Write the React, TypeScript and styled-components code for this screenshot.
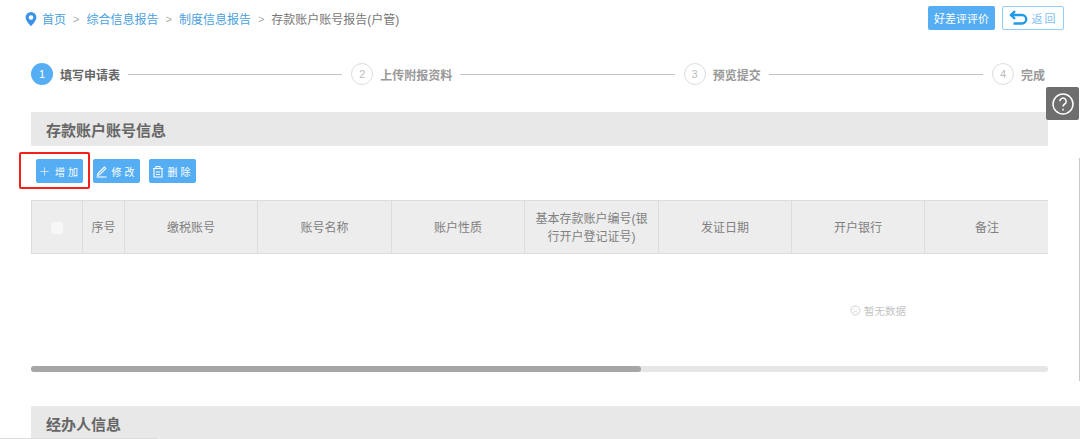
import styled, { createGlobalStyle } from "styled-components";
import { Plus } from "lucide-react";

const GlobalStyle = createGlobalStyle`
  html, body {
    margin: 0;
    padding: 0;
    background: #fff;
    overflow: hidden;
    font-family: "Liberation Sans", "Noto Sans CJK SC", sans-serif;
  }
`

const Page = styled.div`
  position: relative;
  width: 1080px;
  height: 439px;
  overflow: hidden;
  box-sizing: border-box;
  padding: 0 32px 0 31px;
`

const TopBar = styled.div`
  display: flex;
  justify-content: space-between;
  align-items: center;
  height: 37px;
`

const Crumbs = styled.div`
  display: flex;
  align-items: center;
  margin-left: -7px;
  font-size: 12px;
  color: #777;
`

const CrumbLink = styled.span`
  color: #4a9fe0;
`

const CrumbSep = styled.span`
  color: #aaa;
  margin: 0 7px;
  font-size: 11px;
`

const TopActions = styled.div`
  display: flex;
  gap: 7px;
  margin-right: -16px;
  margin-top: -1px;
`

const RateButton = styled.div`
  width: 67px;
  height: 24px;
  display: flex;
  align-items: center;
  justify-content: center;
  background: #55aef4;
  border-radius: 2px;
  color: #fff;
  font-size: 11px;
`

const BackButton = styled.div`
  width: 62px;
  height: 24px;
  box-sizing: border-box;
  display: flex;
  align-items: center;
  justify-content: center;
  gap: 4px;
  border: 1px solid #93cdf8;
  border-radius: 2px;
  color: #7cc0f4;
  font-size: 11px;
  letter-spacing: 2px;
`

const Stepper = styled.div`
  display: flex;
  align-items: center;
  height: 24px;
  margin-top: 25px;
  margin-right: 3px;
`

const StepCircle = styled.div<{ $active?: boolean }>`
  width: 22px;
  height: 22px;
  box-sizing: border-box;
  flex-shrink: 0;
  border-radius: 50%;
  display: flex;
  align-items: center;
  justify-content: center;
  font-size: 11px;
  background: ${(p) => (p.$active ? "#55aef4" : "#fff")};
  color: ${(p) => (p.$active ? "#fff" : "#bbb")};
  border: ${(p) => (p.$active ? "none" : "1px solid #ddd")};
`

const StepLabel = styled.div<{ $active?: boolean }>`
  margin-left: 7px;
  font-size: 12px;
  font-weight: 700;
  flex-shrink: 0;
  color: ${(p) => (p.$active ? "#666" : "#999")};
`

const StepLine = styled.div`
  flex: 1 1 0;
  height: 1px;
  background: #c4c4c4;
  margin: 0 9px 0 8px;
`

const SectionBar = styled.div<{ $gap: number; $bleed?: boolean }>`
  height: 34px;
  flex-shrink: 0;
  display: flex;
  align-items: center;
  padding-left: 15px;
  margin-top: ${(p) => p.$gap}px;
  margin-right: ${(p) => (p.$bleed ? "-32px" : "0")};
  background: #e8e8e8;
  font-size: 15px;
  font-weight: 700;
  color: #666;
`

const Toolbar = styled.div`
  position: relative;
  display: flex;
  gap: 9.5px;
  padding-left: 5px;
  margin-top: 13px;
`

const ToolButton = styled.div`
  height: 24px;
  width: 47px;
  display: flex;
  align-items: center;
  justify-content: center;
  gap: 4px;
  background: #55aef4;
  border-radius: 2px;
  color: #fff;
  font-size: 10px;
  letter-spacing: 3px;
`

const Highlight = styled.div`
  position: absolute;
  left: -12px;
  top: -7px;
  width: 71px;
  height: 37px;
  box-sizing: border-box;
  border: 2.5px solid #f5201c;
  border-radius: 2px;
`

const TableHead = styled.div`
  display: grid;
  grid-template-columns: 51px 42px 133px 134px 133px 134px 133px 133px 124px;
  height: 54px;
  box-sizing: border-box;
  margin-top: 17px;
  background: #ededed;
  border-top: 1px solid #dcdcdc;
  border-bottom: 1px solid #dcdcdc;
  border-left: 1px solid #dcdcdc;
`

const HeadCell = styled.div`
  display: flex;
  align-items: center;
  justify-content: center;
  text-align: center;
  padding: 1px 8px 0;
  border-right: 1px solid #dcdcdc;
  font-size: 12px;
  line-height: 18px;
  color: #808080;

  &:last-child {
    border-right: none;
  }
`

const FakeCheck = styled.div`
  width: 12px;
  height: 12px;
  background: #f7f7f7;
  border-radius: 2px;
`

const EmptyArea = styled.div`
  height: 112px;
  display: flex;
  align-items: center;
  justify-content: flex-end;
  padding: 0 142px 0 0;
  box-sizing: border-box;
`

const EmptyText = styled.div`
  display: flex;
  align-items: center;
  gap: 3px;
  font-size: 10.5px;
  color: #c4c4c4;
`

const ScrollTrack = styled.div`
  height: 6px;
  background: #e6e6e6;
  border-radius: 3px;
`

const ScrollThumb = styled.div`
  width: 610px;
  height: 6px;
  background: #a6a6a6;
  border-radius: 3px;
`

const HelpBox = styled.div`
  position: absolute;
  left: 1046px;
  top: 87px;
  width: 33px;
  height: 33px;
  display: flex;
  align-items: center;
  justify-content: center;
  background: #6e6e6e;
  border-radius: 2px;
`

const BottomEdge = styled.div`
  position: absolute;
  left: 0;
  bottom: 0;
  width: 157px;
  height: 1px;
  background: #dcdcdc;
`

const PageScrollbar = styled.div`
  position: absolute;
  right: 0;
  top: 158px;
  width: 1px;
  height: 223px;
  background: #c8c8c8;
`

const columns = [
  "序号",
  "缴税账号",
  "账号名称",
  "账户性质",
  "基本存款账户编号(银行开户登记证号)",
  "发证日期",
  "开户银行",
  "备注",
];

export default function App(): JSX.Element {
  return (
    <Page>
      <GlobalStyle />
      <TopBar>
        <Crumbs>
          <svg width="14" height="16" viewBox="0 0 14 16" style={{ marginRight: 4 }}>
            <path
              fillRule="evenodd"
              fill="#3b92e8"
              d="M7 1a5.4 5.4 0 0 0-5.4 5.4C1.6 10 7 15 7 15s5.400-5 5.400-8.600A5.400 5.400 0 0 0 7 1Zm0 3.200a2.300 2.300 0 1 1 0 4.600 2.300 2.300 0 0 1 0-4.600Z"
            />
          </svg>
          <CrumbLink>首页</CrumbLink>
          <CrumbSep>&gt;</CrumbSep>
          <CrumbLink>综合信息报告</CrumbLink>
          <CrumbSep>&gt;</CrumbSep>
          <CrumbLink>制度信息报告</CrumbLink>
          <CrumbSep>&gt;</CrumbSep>
          <span>存款账户账号报告(户管)</span>
        </Crumbs>
        <TopActions>
          <RateButton>好差评评价</RateButton>
          <BackButton>
            <svg width="19" height="16" viewBox="0 0 19 16" fill="none" stroke="#1f9be8" strokeWidth="2.400">
              <path d="M6 1.200 2 5l4 3.800" />
              <path d="M2.500 5H13a4 4 0 0 1 0 8.500H4.500" />
            </svg>
            返回
          </BackButton>
        </TopActions>
      </TopBar>

      <Stepper>
        <StepCircle $active>1</StepCircle>
        <StepLabel $active>填写申请表</StepLabel>
        <StepLine />
        <StepCircle>2</StepCircle>
        <StepLabel>上传附报资料</StepLabel>
        <StepLine />
        <StepCircle>3</StepCircle>
        <StepLabel>预览提交</StepLabel>
        <StepLine />
        <StepCircle>4</StepCircle>
        <StepLabel>完成</StepLabel>
      </Stepper>

      <SectionBar $gap={26}>存款账户账号信息</SectionBar>

      <Toolbar>
        <ToolButton>
          <Plus size={13} strokeWidth={1.2} />
          增加
        </ToolButton>
        <ToolButton>
          <svg width="13" height="13" viewBox="0 0 13 13" fill="none" stroke="#fff" strokeWidth="1.1">
            <path d="M3 8.500 9.300 2l1.500 1.500L4.500 9.800l-2 .4.500-1.700Z" />
            <path d="M1.500 12h10" />
          </svg>
          修改
        </ToolButton>
        <ToolButton>
          <svg width="12" height="13" viewBox="0 0 12 13" fill="none" stroke="#fff" strokeWidth="1.100">
            <path d="M1 3.500h10M4 3.500V1.500h4v2" />
            <path d="M2 3.500v8.500h8V3.500" />
            <path d="M4 7h4M4 9.500h4" />
          </svg>
          删除
        </ToolButton>
        <Highlight />
      </Toolbar>

      <TableHead>
        <HeadCell>
          <FakeCheck />
        </HeadCell>
        {columns.map((c) => (
          <HeadCell key={c}>{c}</HeadCell>
        ))}
      </TableHead>

      <EmptyArea>
        <EmptyText>
          <svg width="11" height="11" viewBox="0 0 11 11" fill="none" stroke="#c4c4c4" strokeWidth="0.8">
            <circle cx="5.500" cy="5.500" r="4.500" />
            <path d="M3.500 7.500c1-1.200 3-1.200 4 0M3.500 4.200h.8M6.700 4.200h.8" />
          </svg>
          暂无数据
        </EmptyText>
      </EmptyArea>

      <ScrollTrack>
        <ScrollThumb />
      </ScrollTrack>

      <SectionBar $gap={34} $bleed>经办人信息</SectionBar>

      <HelpBox>
        <svg width="24" height="24" viewBox="0 0 24 24" fill="none" stroke="#fff" strokeWidth="1.500">
          <circle cx="12" cy="12" r="10" />
          <path d="M8.800 9.300a3.200 3.200 0 1 1 4.900 2.700c-1.100.7-1.700 1.300-1.700 2.600" />
          <path d="M12 16.800v1.600" />
        </svg>
      </HelpBox>
      <PageScrollbar />
      <BottomEdge />
    </Page>
  )
}
